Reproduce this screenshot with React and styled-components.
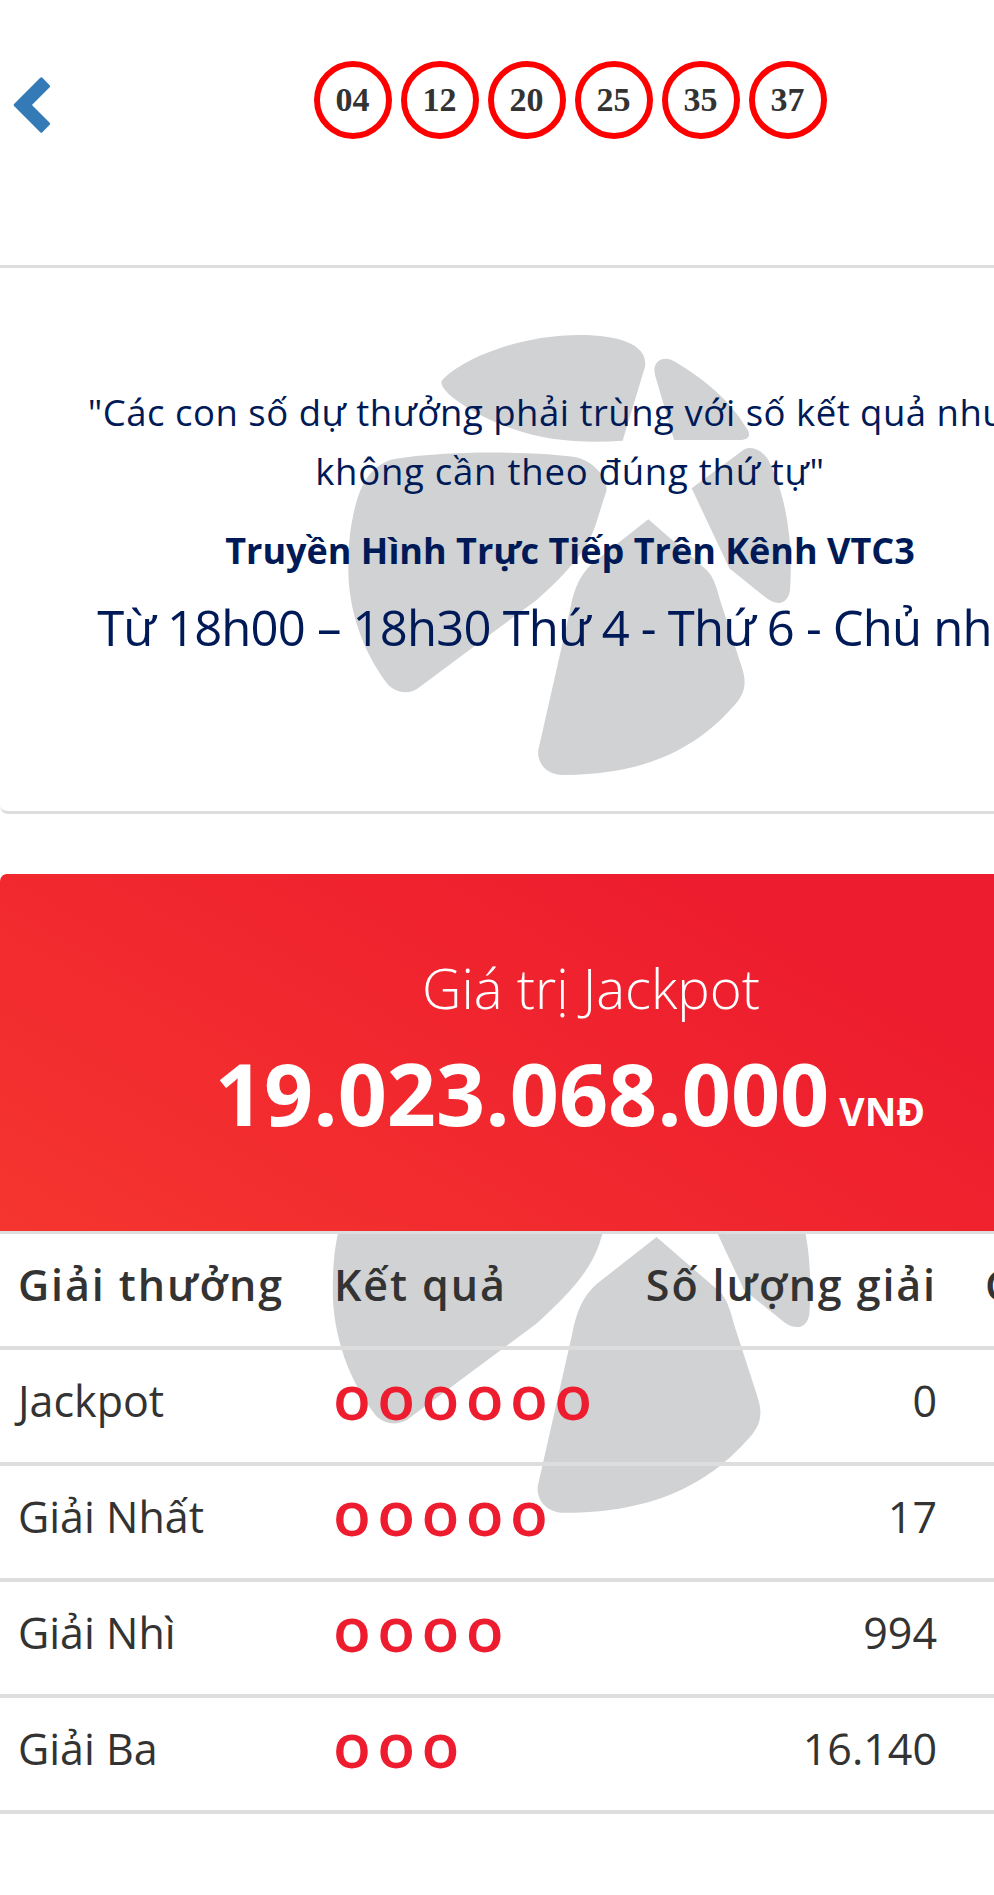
import React from 'react'
import styled, { createGlobalStyle } from 'styled-components'

const GlobalStyle = createGlobalStyle`
  html, body {
    margin: 0;
    padding: 0;
    background: #fff;
    overflow-x: hidden;
  }
  body {
    font-family: 'Open Sans', 'Noto Sans', sans-serif;
    color: #333;
  }
`

const Page = styled.div`
  width: 1400px;
  min-height: 1895px;
`
const Header = styled.div`
  width: 1140px;
  height: 265px;
  box-sizing: border-box;
  padding-top: 61px;
  display: grid;
  grid-template-columns: 1fr auto 1fr;
  align-items: start;
`
const BackLink = styled.a`
  display: block;
  width: 40px;
  height: 60px;
  margin: 14px 0 0 12px;
`
const Balls = styled.div`
  display: flex;
  gap: 9px;
`
const Ball = styled.span`
  width: 78px;
  height: 78px;
  box-sizing: border-box;
  border: 6px solid #f00;
  border-radius: 50%;
  display: flex;
  align-items: center;
  justify-content: center;
  font-family: 'Liberation Serif', serif;
  font-weight: 700;
  font-size: 34px;
  color: #333;
`
const NoteCard = styled.div`
  position: relative;
  width: 1140px;
  height: 549px;
  box-sizing: border-box;
  border-top: 3px solid #ddd;
  border-bottom: 3px solid #ddd;
  border-radius: 0 0 8px 8px;
  padding-top: 115px;
  margin-bottom: 60px;
  color: #001a57;
  text-align: center;
`
const Watermark = styled.svg`
  position: absolute;
  left: ${(p) => p.$left}px;
  top: ${(p) => p.$top}px;
  width: ${(p) => p.$width}px;
  height: ${(p) => p.$height}px;
`
const Quote = styled.div`
  position: relative;
  font-size: 36.5px;
  line-height: 59px;
  white-space: nowrap;
  padding-right: ${(p) => p.$shift || 0}px;
  letter-spacing: ${(p) => p.$tracking || 0}px;
`
const Channel = styled.div`
  position: relative;
  margin-top: 20px;
  font-size: 36px;
  font-weight: 700;
  line-height: 59px;
  white-space: nowrap;
`
const Schedule = styled.div`
  position: relative;
  margin-top: 12px;
  padding-right: 8px;
  font-size: 49px;
  letter-spacing: -0.8px;
  line-height: 70px;
  white-space: nowrap;
`
const JackpotBanner = styled.div`
  width: 1140px;
  height: 357px;
  box-sizing: border-box;
  padding-top: 79px;
  border-radius: 7px 7px 0 0;
  background: linear-gradient(30deg, #f5352f 0%, #ed1c2e 75%);
  color: #fff;
  text-align: center;
`
const JackpotLabel = styled.div`
  font-size: 54.5px;
  font-weight: 300;
  line-height: 70px;
  padding-left: 42px;
`
const JackpotValue = styled.div`
  margin-top: 20px;
  display: flex;
  justify-content: center;
  align-items: baseline;
  gap: 10px;
  line-height: 100px;
`
const Amount = styled.span`
  font-size: 86px;
  font-weight: 700;
`
const Currency = styled.span`
  font-size: 39px;
  font-weight: 700;
`
const TableWrap = styled.div`
  position: relative;
  overflow: hidden;
  border-top: 3px solid #ddd;
`
const PrizeTable = styled.table`
  position: relative;
  width: 1400px;
  table-layout: fixed;
  border-collapse: collapse;
`
const HeadCell = styled.th`
  height: 114px;
  box-sizing: border-box;
  padding: 0 ${(p) => p.$right || 0}px 12px ${(p) => p.$left || 0}px;
  border-bottom: 4px solid #ddd;
  text-align: ${(p) => (p.$right ? 'right' : 'left')};
  font-size: 43px;
  font-weight: 600;
  letter-spacing: 1.9px;
  white-space: nowrap;
  color: #333;
`
const Cell = styled.td`
  height: 116px;
  box-sizing: border-box;
  padding: 0 ${(p) => p.$right || 0}px 12px ${(p) => p.$left || 0}px;
  border-bottom: 4px solid #ddd;
  text-align: ${(p) => (p.$right ? 'right' : 'left')};
  font-size: 43px;
  white-space: nowrap;
  color: #333;
`
const Matches = styled.span`
  font-size: 62px;
  font-weight: 600;
  letter-spacing: 6.4px;
  line-height: 1;
  vertical-align: 2px;
  color: #ed1c2e;
`

const BALLS = ['04', '12', '20', '25', '35', '37']
const PRIZES = [
  { name: 'Jackpot', match: 6, count: '0', value: '19.023.068.000' },
  { name: 'Giải Nhất', match: 5, count: '17', value: '10.000.000' },
  { name: 'Giải Nhì', match: 4, count: '994', value: '300.000' },
  { name: 'Giải Ba', match: 3, count: '16.140', value: '30.000' },
]

const Petals = () => (
  <g fill="#d1d2d4">
    <path d="M365 212C420 150 590 75 780 75C900 75 985 105 975 170L908 392C800 400 680 395 560 350C480 320 400 270 380 245C368 232 362 222 365 212Z" />
    <path d="M1003 180C1003 150 1035 135 1065 155C1150 205 1230 270 1280 355C1300 385 1275 392 1250 390L1062 390L1005 195Z" />
    <path d="M95 640C110 560 130 480 210 450C330 425 600 420 760 440C820 450 860 500 860 540L825 650C800 720 750 780 650 870L300 1130C270 1155 230 1150 205 1125C130 1030 85 900 85 780C85 720 88 680 95 640Z" />
    <path d="M1115 535L1270 420C1295 405 1325 420 1345 450C1400 560 1420 700 1410 840C1405 880 1375 890 1340 865L1228 775Z" />
    <path d="M985 628L1160 780C1180 800 1190 830 1200 870L1265 1070C1285 1130 1270 1160 1230 1200C1130 1310 980 1395 730 1395C680 1395 650 1360 655 1320L750 900C765 820 790 780 830 750Z" />
  </g>
)

const App = () => {
  return (
    <Page>
      <GlobalStyle />
      <Header>
        <BackLink>
          <svg width="40" height="60" viewBox="0 0 40 60">
            <polygon
              points="29.3,3.9 36.6,11.2 17.9,30 36.6,48.8 29.3,56.1 3.1,30"
              fill="#337ab7"
              stroke="#337ab7"
              strokeWidth="3"
              strokeLinejoin="round"
            />
          </svg>
        </BackLink>
        <Balls>
          {BALLS.map((b) => (
            <Ball key={b}>{b}</Ball>
          ))}
        </Balls>
      </Header>
      <NoteCard>
        <Watermark $left={320} $top={42} $width={500} $height={480} viewBox="0 0 1500 1440">
          <Petals />
        </Watermark>
        <Quote $shift={2} $tracking={0.5}>"Các con số dự thưởng phải trùng với số kết quả nhưng</Quote>
        <Quote $tracking={0.75}>không cần theo đúng thứ tự"</Quote>
        <Channel>Truyền Hình Trực Tiếp Trên Kênh VTC3</Channel>
        <Schedule>Từ 18h00 – 18h30 Thứ 4 - Thứ 6 - Chủ nhật</Schedule>
      </NoteCard>
      <JackpotBanner>
        <JackpotLabel>Giá trị Jackpot</JackpotLabel>
        <JackpotValue>
          <Amount>19.023.068.000</Amount>
          <Currency>VNĐ</Currency>
        </JackpotValue>
      </JackpotBanner>
      <TableWrap>
        <Watermark $left={302} $top={-223} $width={540} $height={518} viewBox="0 0 1500 1440">
          <Petals />
        </Watermark>
        <PrizeTable>
          <colgroup>
            <col style={{ width: 317 }} />
            <col style={{ width: 303 }} />
            <col style={{ width: 349 }} />
            <col />
          </colgroup>
          <thead>
            <tr>
              <HeadCell $left={18}>Giải thưởng</HeadCell>
              <HeadCell $left={17}>Kết quả</HeadCell>
              <HeadCell $right={32}>Số lượng giải</HeadCell>
              <HeadCell $left={16}>Giá trị giải</HeadCell>
            </tr>
          </thead>
          <tbody>
            {PRIZES.map((p) => (
              <tr key={p.name}>
                <Cell $left={18}>{p.name}</Cell>
                <Cell $left={16}>
                  <Matches>{'o'.repeat(p.match)}</Matches>
                </Cell>
                <Cell $right={32}>{p.count}</Cell>
                <Cell $right={18}>{p.value}</Cell>
              </tr>
            ))}
          </tbody>
        </PrizeTable>
      </TableWrap>
    </Page>
  )
}

export default App
